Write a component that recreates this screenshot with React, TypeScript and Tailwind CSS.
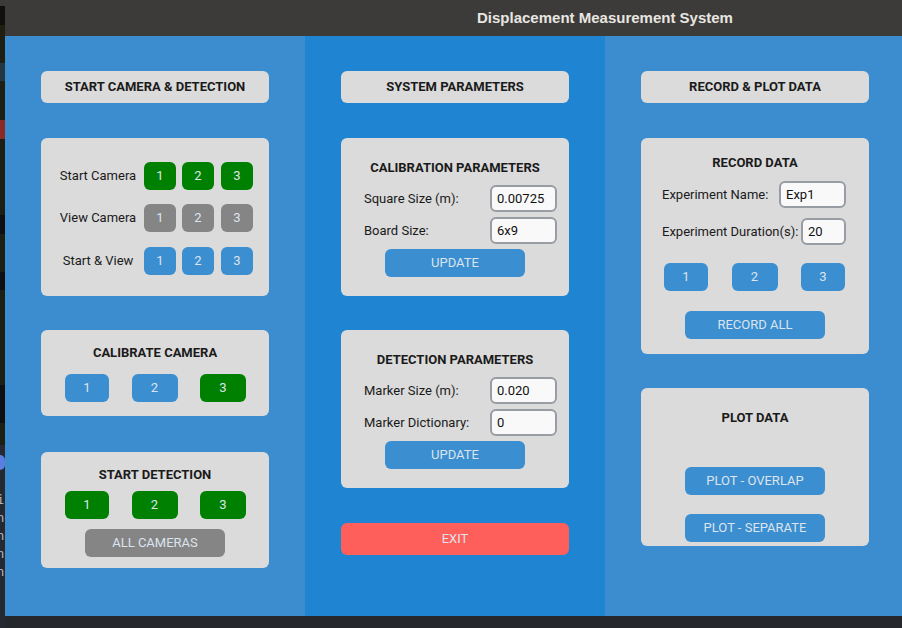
import React from 'react';

const font = { fontFamily: 'Roboto, "Liberation Sans", sans-serif' };

// colours of the desktop strip that peeks out at the left edge
const strip = [
  { h: 6, c: 'bg-[#3a3a36]' },
  { h: 19, c: 'bg-[#0f0f0f]' },
  { h: 38, c: 'bg-[#1f1e12]' },
  { h: 18, c: 'bg-[#243843]' },
  { h: 39, c: 'bg-[#1f1e12]' },
  { h: 19, c: 'bg-[#8a2a25]' },
  { h: 76, c: 'bg-[#1f1e12]' },
  { h: 19, c: 'bg-[#0f0f0f]' },
  { h: 38, c: 'bg-[#1f1e12]' },
  { h: 18, c: 'bg-[#0f0f0f]' },
  { h: 95, c: 'bg-[#1f1e12]' },
  { h: 38, c: 'bg-[#0f0f0f]' },
  { h: 22, c: 'bg-[#1f1e12]' },
];

function Header({ children }: { children: React.ReactNode }) {
  return (
    <div className="w-[228px] h-[32px] rounded-[6px] bg-[#dbdbdb] flex items-center justify-center text-[13px] font-bold text-[#1a1a1a]">
      {children}
    </div>
  );
}

function Panel({ className, children }: { className: string; children: React.ReactNode }) {
  return <div className={`w-[228px] rounded-[6px] bg-[#dbdbdb] flex flex-col ${className}`}>{children}</div>;
}

function Title({ children }: { children: React.ReactNode }) {
  return <div className="h-[16px] leading-[16px] text-center text-[13px] font-bold text-[#1a1a1a]">{children}</div>;
}

function Btn({ label, color, className }: { label: string; color: string; className: string }) {
  return (
    <div className={`h-[28px] rounded-[6px] flex items-center justify-center text-[13px] text-[#dce4ee] ${color} ${className}`}>
      {label}
    </div>
  );
}

function Entry({ value, className }: { value: string; className: string }) {
  return (
    <div className={`h-[27px] rounded-[6px] border-2 border-[#979da2] bg-[#f9f9fa] px-[5px] flex items-center text-[13px] text-[#111] ${className}`}>
      {value}
    </div>
  );
}

const green = 'bg-[#008000]';
const gray = 'bg-[#858585]';
const blue = 'bg-[#3b8ed0]';

function CamRow({ label, color, className }: { label: string; color: string; className: string }) {
  return (
    <div className={`flex items-center pl-[17px] ${className}`}>
      <div className="w-[80px] text-center text-[13px] text-[#1a1a1a]">{label}</div>
      <Btn label="1" color={color} className="w-[32px] ml-[6px]" />
      <Btn label="2" color={color} className="w-[32px] ml-[6px]" />
      <Btn label="3" color={color} className="w-[32px] ml-[7px]" />
    </div>
  );
}

function Triple({ color3, all }: { color3: string; all?: boolean }) {
  const c = all ? green : blue;
  return (
    <div className="flex pl-[24px] pr-[23px] justify-between">
      <Btn label="1" color={c} className="w-[44px]" />
      <Btn label="2" color={c} className="w-[46px]" />
      <Btn label="3" color={color3} className="w-[46px]" />
    </div>
  );
}

function ParamRow({ label, value, className }: { label: string; value: string; className: string }) {
  return (
    <div className={`flex items-center justify-between pl-[23px] pr-[12px] ${className}`}>
      <span className="text-[13px] text-[#1a1a1a]">{label}</span>
      <Entry value={value} className="w-[67px]" />
    </div>
  );
}

export default function App() {
  return (
    <div className="w-[902px] h-[628px] flex overflow-hidden bg-[#25272c]" style={font}>
      <div className="w-[5px] flex flex-col">
        {strip.map((s, i) => (
          <div key={i} className={s.c} style={{ height: s.h }} />
        ))}
        <div className="h-[10px] bg-[#262931]" />
        <div className="h-[15px] bg-[#5b7ee0] rounded-r-full" />
        <div className="flex-1 bg-[#262931] flex flex-col items-start pt-[24px] gap-[5px] text-[12px] leading-[13px] text-[#bbbbbb] overflow-hidden" style={{ fontFamily: '"DejaVu Sans Mono", monospace' }}>
          <span className="-ml-[3px]">i</span>
          <span className="-ml-[3px]">n</span>
          <span className="-ml-[3px]">n</span>
          <span className="-ml-[3px]">n</span>
          <span className="-ml-[3px]">n</span>
        </div>
      </div>

      <div className="w-[897px] flex flex-col">
        <div className="h-[36px] bg-[#3d3b39] flex items-center pl-[472px]">
          <span className="text-[15px] font-bold text-[#e8e6e1]" style={{ fontFamily: '"Liberation Sans", sans-serif' }}>
            Displacement Measurement System
          </span>
        </div>

        <div className="h-[580px] flex">
          {/* left column */}
          <div className="w-[300px] bg-[#3c8dd0] flex flex-col items-center pt-[35px]">
            <Header>START CAMERA &amp; DETECTION</Header>
            <Panel className="mt-[35px] h-[158px] pt-[24px]">
              <CamRow label="Start Camera" color={green} className="" />
              <CamRow label="View Camera" color={gray} className="mt-[14px]" />
              <CamRow label="Start & View" color={blue} className="mt-[15px]" />
            </Panel>
            <Panel className="mt-[34px] h-[86px] pt-[15px]">
              <Title>CALIBRATE CAMERA</Title>
              <div className="mt-[13px]">
                <Triple color3={green} />
              </div>
            </Panel>
            <Panel className="mt-[36px] h-[116px] pt-[15px] items-center">
              <Title>START DETECTION</Title>
              <div className="mt-[8px] w-full">
                <Triple color3={green} all />
              </div>
              <Btn label="ALL CAMERAS" color={gray} className="w-[140px] mt-[10px]" />
            </Panel>
          </div>

          {/* middle column */}
          <div className="w-[300px] bg-[#1f84d1] flex flex-col items-center pt-[35px]">
            <Header>SYSTEM PARAMETERS</Header>
            <Panel className="mt-[35px] h-[158px] pt-[22px]">
              <Title>CALIBRATION PARAMETERS</Title>
              <ParamRow label="Square Size (m):" value="0.00725" className="mt-[9px]" />
              <ParamRow label="Board Size:" value="6x9" className="mt-[5px]" />
              <Btn label="UPDATE" color={blue} className="w-[140px] mt-[5px] self-center" />
            </Panel>
            <Panel className="mt-[34px] h-[158px] pt-[22px]">
              <Title>DETECTION PARAMETERS</Title>
              <ParamRow label="Marker Size (m):" value="0.020" className="mt-[9px]" />
              <ParamRow label="Marker Dictionary:" value="0" className="mt-[5px]" />
              <Btn label="UPDATE" color={blue} className="w-[140px] mt-[5px] self-center" />
            </Panel>
            <div className="mt-[35px] w-[228px] h-[32px] rounded-[6px] bg-[#ff5f5a] flex items-center justify-center text-[13px] text-[#dce4ee]">
              EXIT
            </div>
          </div>

          {/* right column */}
          <div className="w-[297px] bg-[#3c8dd0] flex flex-col pl-[36px] pt-[35px]">
            <Header>RECORD &amp; PLOT DATA</Header>
            <Panel className="mt-[35px] h-[216px] pt-[17px]">
              <Title>RECORD DATA</Title>
              <div className="mt-[10px] flex items-center justify-between pl-[21px] pr-[23px]">
                <span className="text-[13px] text-[#1a1a1a]">Experiment Name:</span>
                <Entry value="Exp1" className="w-[67px]" />
              </div>
              <div className="mt-[10px] flex items-center justify-between pl-[21px] pr-[23px]">
                <span className="text-[13px] text-[#1a1a1a]">Experiment Duration(s):</span>
                <Entry value="20" className="w-[45px]" />
              </div>
              <div className="mt-[18px] flex pl-[23px] pr-[24px] justify-between">
                <Btn label="1" color={blue} className="w-[44px]" />
                <Btn label="2" color={blue} className="w-[46px]" />
                <Btn label="3" color={blue} className="w-[44px]" />
              </div>
              <Btn label="RECORD ALL" color={blue} className="w-[140px] mt-[20px] self-center" />
            </Panel>
            <Panel className="mt-[34px] h-[158px] pt-[22px] items-center">
              <Title>PLOT DATA</Title>
              <Btn label="PLOT - OVERLAP" color={blue} className="w-[140px] mt-[41px]" />
              <Btn label="PLOT - SEPARATE" color={blue} className="w-[140px] mt-[19px]" />
            </Panel>
          </div>
        </div>

        <div className="flex-1 bg-[#25272c]" />
      </div>
    </div>
  );
}
